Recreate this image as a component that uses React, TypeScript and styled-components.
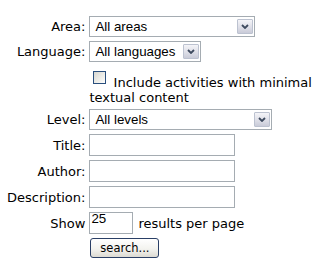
import React from "react";
import styled, { createGlobalStyle } from "styled-components";

const GlobalStyle = createGlobalStyle`
  html, body {
    margin: 0;
    padding: 0;
    background: #ffffff;
  }
  body {
    font-family: "DejaVu Sans", Verdana, sans-serif;
    font-size: 13px;
    color: #000000;
  }
`;

const Form = styled.form`
  display: grid;
  grid-template-columns: auto 226px;
  justify-content: start;
  column-gap: 4px;
  row-gap: 4px;
  align-items: center;
  padding: 16px 0 0 7px;
`;

const Label = styled.label`
  text-align: right;
  white-space: nowrap;
`;

const Cell = styled.div`
  display: flex;
  align-items: center;
  gap: 5px;
`;

const WrapCell = styled.div`
  padding-top: 2px;
  line-height: 15px;
`;

const SelectBox = styled.div<{ $w: number }>`
  box-sizing: border-box;
  width: ${(p) => p.$w}px;
  height: 21px;
  border: 1px solid #a5acb2;
  background: #ffffff;
  display: flex;
  align-items: center;
  padding: 0 1px 0 5px;
  font-family: "Liberation Sans", Arial, sans-serif;
  font-size: 13.33px;
`;

const SelectText = styled.span`
  flex: 1;
  white-space: nowrap;
  overflow: hidden;
`;

const ArrowButton = styled.span`
  box-sizing: border-box;
  width: 16px;
  height: 15px;
  border: 1px solid #bcc2d0;
  border-radius: 1px;
  background: linear-gradient(#f4f4f8, #dcdde6 60%, #c9cbd8);
  display: flex;
  align-items: center;
  justify-content: center;
`;

const TextInput = styled.input<{ $w: number }>`
  box-sizing: border-box;
  width: ${(p) => p.$w}px;
  height: 22px;
  border: 1px solid #a5acb2;
  padding: 0 1px 9px 1px;
  margin: 0;
  font-family: "Liberation Sans", Arial, sans-serif;
  font-size: 13.33px;
  color: #000;
  background: #fff;
  outline: none;
`;

const Check = styled.input`
  appearance: none;
  -webkit-appearance: none;
  box-sizing: border-box;
  width: 13px;
  height: 13px;
  margin: 3px 3px 3px 4px;
  vertical-align: baseline;
  border: 1px solid #2a4f7d;
  background: linear-gradient(135deg, #d6d6d0, #f2f2ee 70%, #ffffff);
`;

const SearchButton = styled.button`
  box-sizing: border-box;
  width: 69px;
  height: 20px;
  margin-left: 1px;
  padding: 0;
  border: 1px solid #2a3f66;
  border-radius: 3px;
  background: linear-gradient(#ffffff, #f3f3ef 55%, #dcdad2);
  font-family: "DejaVu Sans", Verdana, sans-serif;
  font-size: 11.5px;
  color: #000;
`;

const Chevron = () => (
  <svg width="8" height="5" viewBox="0 0 8 5">
    <path d="M1 1 L4 4 L7 1" fill="none" stroke="#3d4a5e" strokeWidth="1.8" />
  </svg>
);

const Select = ({ w, text }: { w: number; text: string }) => (
  <SelectBox $w={w}>
    <SelectText>{text}</SelectText>
    <ArrowButton>
      <Chevron />
    </ArrowButton>
  </SelectBox>
);

export default function App() {
  return (
    <>
      <GlobalStyle />
      <Form onSubmit={(e) => e.preventDefault()}>
        <Label>Area:</Label>
        <Cell>
          <Select w={166} text="All areas" />
        </Cell>

        <Label>Language:</Label>
        <Cell>
          <Select w={112} text="All languages" />
        </Cell>

        <span />
        <WrapCell>
          <Check type="checkbox" /> Include activities with minimal textual content
        </WrapCell>

        <Label>Level:</Label>
        <Cell>
          <Select w={183} text="All levels" />
        </Cell>

        <Label>Title:</Label>
        <Cell>
          <TextInput $w={146} />
        </Cell>

        <Label>Author:</Label>
        <Cell>
          <TextInput $w={146} />
        </Cell>

        <Label>Description:</Label>
        <Cell>
          <TextInput $w={146} />
        </Cell>

        <Label>Show</Label>
        <Cell>
          <TextInput $w={44} defaultValue="25" />
          <span>results per page</span>
        </Cell>

        <span />
        <Cell>
          <SearchButton type="submit">search...</SearchButton>
        </Cell>
      </Form>
    </>
  );
}
